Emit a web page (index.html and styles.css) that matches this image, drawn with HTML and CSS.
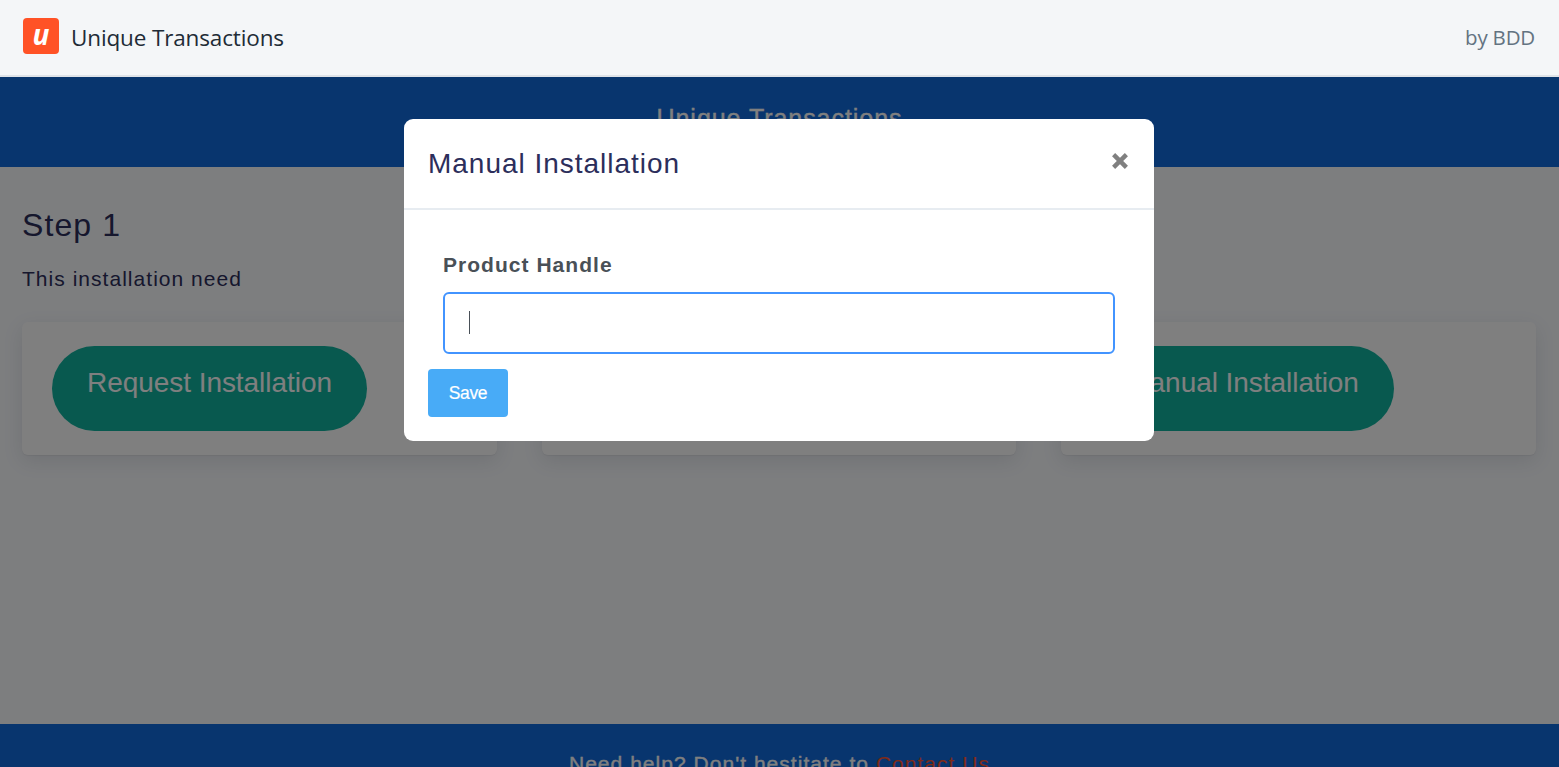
FILE: index.html
```html
<!DOCTYPE html>
<html lang="en">
<head>
<meta charset="utf-8">
<title>Unique Transactions</title>
<link rel="stylesheet" href="styles.css">
</head>
<body>
<header class="topbar">
  <div class="brand">
    <div class="logo">u</div>
    <span class="brand-name">Unique Transactions</span>
  </div>
  <span class="author">by BDD</span>
</header>
<div class="app">
  <div class="banner">Unique Transactions</div>
  <main class="content">
    <h1 class="step">Step 1</h1>
    <p class="note">This installation need</p>
    <div class="cards">
      <section class="card"><button class="pill">Request Installation</button></section>
      <section class="card"></section>
      <section class="card"><button class="pill">Manual Installation</button></section>
    </div>
  </main>
  <footer class="footer">Need help? Don't hestitate to <a class="contact">Contact Us</a></footer>
  <div class="overlay">
    <div class="modal">
      <div class="modal-head">
        <h2 class="modal-title">Manual Installation</h2>
        <svg class="close" viewBox="0 0 18 18"><path d="M2.6 2.6 15.4 15.4M15.4 2.6 2.6 15.4"/></svg>
      </div>
      <div class="modal-body">
        <div class="group">
          <label class="label">Product Handle</label>
          <div class="field"><span class="caret"></span></div>
        </div>
        <button class="save">Save</button>
      </div>
    </div>
  </div>
</div>
</body>
</html>
```
FILE: styles.css
```css
* { box-sizing: border-box; }
body {
  margin: 0;
  height: 767px;
  overflow: hidden;
  display: flex;
  flex-direction: column;
  font-family: "Liberation Sans", Arial, sans-serif;
  letter-spacing: 1.03px;
  color: #2c2e5b;
}
h1, h2, p { margin: 0; font-weight: 400; }
button { border: 0; font-family: inherit; }
.topbar {
  height: 77px;
  flex: none;
  display: flex;
  justify-content: space-between;
  padding: 18px 24px 0 23px;
  background: #f4f6f8;
  border-bottom: 2px solid #dfe3e8;
  font-family: "Open Sans", "Noto Sans", sans-serif;
  letter-spacing: 0;
}
.brand { display: flex; gap: 12px; }
.logo {
  width: 36px;
  height: 36px;
  border-radius: 4px;
  background: #ff5226;
  color: #fff;
  font-size: 28px;
  font-weight: 700;
  font-style: italic;
  line-height: 32px;
  text-align: center;
}
.brand-name {
  font-size: 22.5px;
  line-height: 40px;
  letter-spacing: -.14px;
  color: #212b36;
}
.author {
  font-size: 20.5px;
  line-height: 38px;
  letter-spacing: -.2px;
  color: #637381;
}
.app {
  position: relative;
  flex: 1;
  min-height: 0;
  display: flex;
  flex-direction: column;
  overflow: hidden;
  background: #fafcff;
}
.banner {
  height: 90px;
  flex: none;
  padding-top: 26px;
  background: #106adc;
  color: #fff;
  font-size: 25px;
  line-height: 30px;
  letter-spacing: .95px;
  text-align: center;
  -webkit-text-stroke: .35px;
}
.content { height: 557px; flex: none; padding: 38px 23px 0 22px; }
.step { font-size: 32px; line-height: 40px; letter-spacing: 1.1px; }
.note { margin-top: 22px; font-size: 21px; line-height: 24px; }
.cards {
  margin-top: 31px;
  display: grid;
  grid-template-columns: repeat(3, 1fr);
  gap: 45px;
}
.card {
  height: 133px;
  padding: 24px 30px;
  border-radius: 6px;
  background: #fff;
  box-shadow: 0 1px 1px rgba(0, 0, 0, .05), 0 6px 20px rgba(30, 40, 60, .11);
}
.pill {
  height: 85px;
  padding: 0 35px 12px;
  border-radius: 43px;
  background: #10b39f;
  color: #fff;
  font-size: 28px;
  letter-spacing: -.05px;
}
.footer {
  flex: none;
  height: 43px;
  padding-top: 27px;
  background: #106adc;
  color: #fff;
  font-size: 21px;
  line-height: 25px;
  text-align: center;
  -webkit-text-stroke: .35px;
}
.contact { color: #ff5530; -webkit-text-stroke: 0; }
.overlay {
  position: absolute;
  inset: 0;
  padding-top: 42px;
  background: rgba(0, 0, 0, .5);
}
.modal {
  width: 750px;
  height: 322px;
  margin: 0 auto 0 404px;
  border-radius: 9px;
  background: #fff;
}
.modal-head {
  height: 91px;
  padding: 25px 25px 0 24px;
  display: flex;
  justify-content: space-between;
  border-bottom: 2px solid #e7ecf1;
}
.modal-title { font-size: 28px; line-height: 40px; letter-spacing: .98px; }
.close {
  width: 18px;
  height: 18px;
  margin-top: 8px;
  fill: none;
  stroke: #808080;
  stroke-width: 4.4;
}
.modal-body { padding: 42px 24px 24px; }
.group { padding: 0 15px; }
.label {
  display: block;
  font-size: 21px;
  line-height: 26px;
  font-weight: 700;
  color: #495057;
}
.field {
  height: 62px;
  margin-top: 14px;
  padding: 17px 24px;
  border: 2px solid #4294ff;
  border-radius: 6px;
}
.caret { display: block; width: 1px; height: 23px; background: #495057; }
.save {
  width: 80px;
  height: 48px;
  padding: 0;
  margin-top: 15px;
  border-radius: 4px;
  background: #48abf7;
  color: #fff;
  font-size: 17.5px;
  letter-spacing: -.4px;
  -webkit-text-stroke: .2px;
}
```
